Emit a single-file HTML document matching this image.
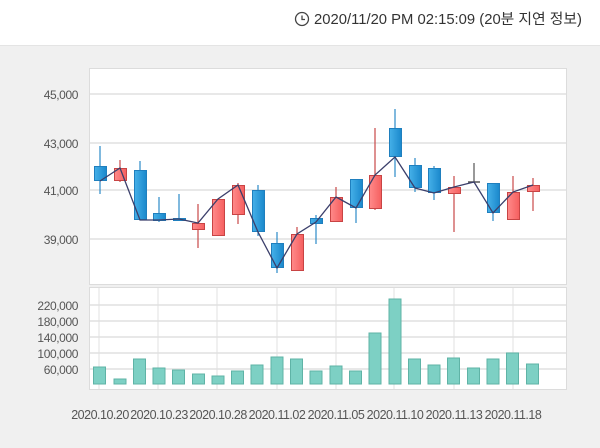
<!DOCTYPE html>
<html><head><meta charset="utf-8"><style>
html,body{margin:0;padding:0;width:600px;height:448px;overflow:hidden;background:#fff;}
svg{display:block}
text{font-family:"Liberation Sans","Noto Sans CJK KR",sans-serif;}
</style></head><body>
<svg width="600" height="448" viewBox="0 0 600 448" xmlns="http://www.w3.org/2000/svg">
<defs>
<linearGradient id="bl" x1="0" x2="1"><stop offset="0" stop-color="#45b0e8"/><stop offset="1" stop-color="#1a88cc"/></linearGradient>
<linearGradient id="rd" x1="0" x2="1"><stop offset="0" stop-color="#ff8a8a"/><stop offset="1" stop-color="#f55f5f"/></linearGradient>
</defs>
<rect x="0" y="0" width="600" height="45" fill="#fff"/>
<rect x="0" y="45" width="600" height="403" fill="#f0f0f0"/>
<line x1="0" y1="45.5" x2="600" y2="45.5" stroke="#e4e4e4"/>
<circle cx="302" cy="19" r="6.5" fill="none" stroke="#444" stroke-width="1.3"/>
<path d="M302 15.5V19.5H305" fill="none" stroke="#444" stroke-width="1.3"/>
<text x="314" y="24" font-size="14.5" fill="#333" textLength="268" lengthAdjust="spacingAndGlyphs">2020/11/20 PM 02:15:09 (20분 지연 정보)</text>

<rect x="89.5" y="68.5" width="477" height="216" fill="#fff" stroke="#dcdcdc"/>
<rect x="89.5" y="287.5" width="477" height="102" fill="#fff" stroke="#dcdcdc"/>
<g stroke="#e0e0e0" stroke-width="1.5">
<line x1="90" y1="94" x2="566" y2="94"/><line x1="90" y1="143" x2="566" y2="143"/>
<line x1="90" y1="190" x2="566" y2="190"/><line x1="90" y1="239" x2="566" y2="239"/>
<line x1="90" y1="305" x2="566" y2="305"/><line x1="90" y1="321" x2="566" y2="321"/>
<line x1="90" y1="337" x2="566" y2="337"/><line x1="90" y1="353" x2="566" y2="353"/>
<line x1="90" y1="369" x2="566" y2="369"/>
<g stroke-width="1">
<line x1="99" y1="288" x2="99" y2="389"/><line x1="158" y1="288" x2="158" y2="389"/>
<line x1="217" y1="288" x2="217" y2="389"/><line x1="277" y1="288" x2="277" y2="389"/>
<line x1="336" y1="288" x2="336" y2="389"/><line x1="394" y1="288" x2="394" y2="389"/>
<line x1="454" y1="288" x2="454" y2="389"/><line x1="513" y1="288" x2="513" y2="389"/>
</g></g>
<g font-size="12" fill="#555" text-anchor="end" letter-spacing="-0.4">
<text x="78" y="99">45,000</text><text x="78" y="148">43,000</text>
<text x="78" y="195">41,000</text><text x="78" y="244">39,000</text>
<text x="78" y="310">220,000</text><text x="78" y="326">180,000</text>
<text x="78" y="342">140,000</text><text x="78" y="358">100,000</text>
<text x="78" y="374">60,000</text>
</g>
<g font-size="12.5" fill="#555" text-anchor="middle" letter-spacing="-0.5">
<text x="100" y="419">2020.10.20</text><text x="159" y="419">2020.10.23</text>
<text x="218" y="419">2020.10.28</text><text x="277" y="419">2020.11.02</text>
<text x="336" y="419">2020.11.05</text><text x="395" y="419">2020.11.10</text>
<text x="454" y="419">2020.11.13</text><text x="513" y="419">2020.11.18</text>
</g>

<g fill="#7dd0c4" stroke="#5fb3a6" stroke-width="1">
<rect x="93.5" y="367" width="12" height="17"/><rect x="114" y="379" width="12" height="5"/>
<rect x="133.5" y="359" width="12" height="25"/><rect x="153" y="368" width="12" height="16"/>
<rect x="172.5" y="370" width="12" height="14"/><rect x="192.5" y="374" width="12" height="10"/>
<rect x="212" y="376" width="12" height="8"/><rect x="231.5" y="371" width="12" height="13"/>
<rect x="251" y="365" width="12" height="19"/><rect x="271" y="357" width="12" height="27"/>
<rect x="290.5" y="359" width="12" height="25"/><rect x="310" y="371" width="12" height="13"/>
<rect x="330" y="366" width="12" height="18"/><rect x="349.5" y="371" width="12" height="13"/>
<rect x="369" y="333" width="12" height="51"/><rect x="389" y="299" width="12" height="85"/>
<rect x="408.5" y="359" width="12" height="25"/><rect x="428" y="365" width="12" height="19"/>
<rect x="447.5" y="358" width="12" height="26"/><rect x="467.5" y="368" width="12" height="16"/>
<rect x="487" y="359" width="12" height="25"/><rect x="506.5" y="353" width="12" height="31"/>
<rect x="526.5" y="364" width="12" height="20"/>
</g>

<g stroke-width="1.2">
<g stroke="#2c8ac8">
<line x1="100" y1="146" x2="100" y2="194"/><line x1="140" y1="161" x2="140" y2="220"/>
<line x1="159" y1="197" x2="159" y2="222"/><line x1="179" y1="194" x2="179" y2="220"/>
<line x1="258" y1="185" x2="258" y2="236"/><line x1="277" y1="232" x2="277" y2="273"/>
<line x1="316" y1="215" x2="316" y2="244"/><line x1="356" y1="179" x2="356" y2="223"/>
<line x1="395" y1="109" x2="395" y2="177"/><line x1="415" y1="158" x2="415" y2="192"/>
<line x1="434" y1="166" x2="434" y2="200"/><line x1="493" y1="183" x2="493" y2="221"/>
</g>
<g stroke="#c94848">
<line x1="120" y1="160" x2="120" y2="182"/><line x1="198" y1="204" x2="198" y2="248"/>
<line x1="238" y1="183" x2="238" y2="224"/><line x1="297" y1="227" x2="297" y2="271"/>
<line x1="336" y1="187" x2="336" y2="222"/><line x1="375" y1="128" x2="375" y2="210"/>
<line x1="454" y1="176" x2="454" y2="232"/><line x1="513" y1="176" x2="513" y2="220"/>
<line x1="533" y1="178" x2="533" y2="211"/>
</g>
<line x1="474" y1="163" x2="474" y2="182" stroke="#555"/>
<line x1="468" y1="182" x2="480" y2="182" stroke="#555" stroke-width="1.5"/>
</g>
<g fill="url(#bl)" stroke="#1f7fbe" stroke-width="1">
<rect x="94.5" y="166.5" width="12" height="14"/><rect x="134.5" y="170.5" width="12" height="49"/>
<rect x="153.5" y="213.5" width="12" height="7"/><rect x="173.5" y="218.5" width="12" height="2"/>
<rect x="252.5" y="190.5" width="12" height="41"/><rect x="271.5" y="243.5" width="12" height="24"/>
<rect x="310.5" y="218.5" width="12" height="5"/><rect x="350.5" y="179.5" width="12" height="28"/>
<rect x="389.5" y="128.5" width="12" height="28"/><rect x="409.5" y="165.5" width="12" height="22"/>
<rect x="428.5" y="168.5" width="12" height="24"/><rect x="487.5" y="183.5" width="12" height="29"/>
</g>
<g fill="url(#rd)" stroke="#c84444" stroke-width="1">
<rect x="114.5" y="168.5" width="12" height="12"/><rect x="192.5" y="223.5" width="12" height="6"/>
<rect x="212.5" y="199.5" width="12" height="36"/><rect x="232.5" y="185.5" width="12" height="29"/>
<rect x="291.5" y="234.5" width="12" height="36"/><rect x="330.5" y="197.5" width="12" height="24"/>
<rect x="369.5" y="175.5" width="12" height="33"/><rect x="448.5" y="187.5" width="12" height="6"/>
<rect x="507.5" y="192.5" width="12" height="27"/><rect x="527.5" y="185.5" width="12" height="6"/>
</g>
<polyline fill="none" stroke="#3b3f6b" stroke-width="1.3" points="100,181 120,168 140,220 159,220 179,219 198,223 218,199 238,185 258,232 277,268 297,234 316,222 336,197 356,208 375,175 395,157 415,188 434,193 454,187 474,182 493,213 513,192 533,185"/>
</svg>
</body></html>
